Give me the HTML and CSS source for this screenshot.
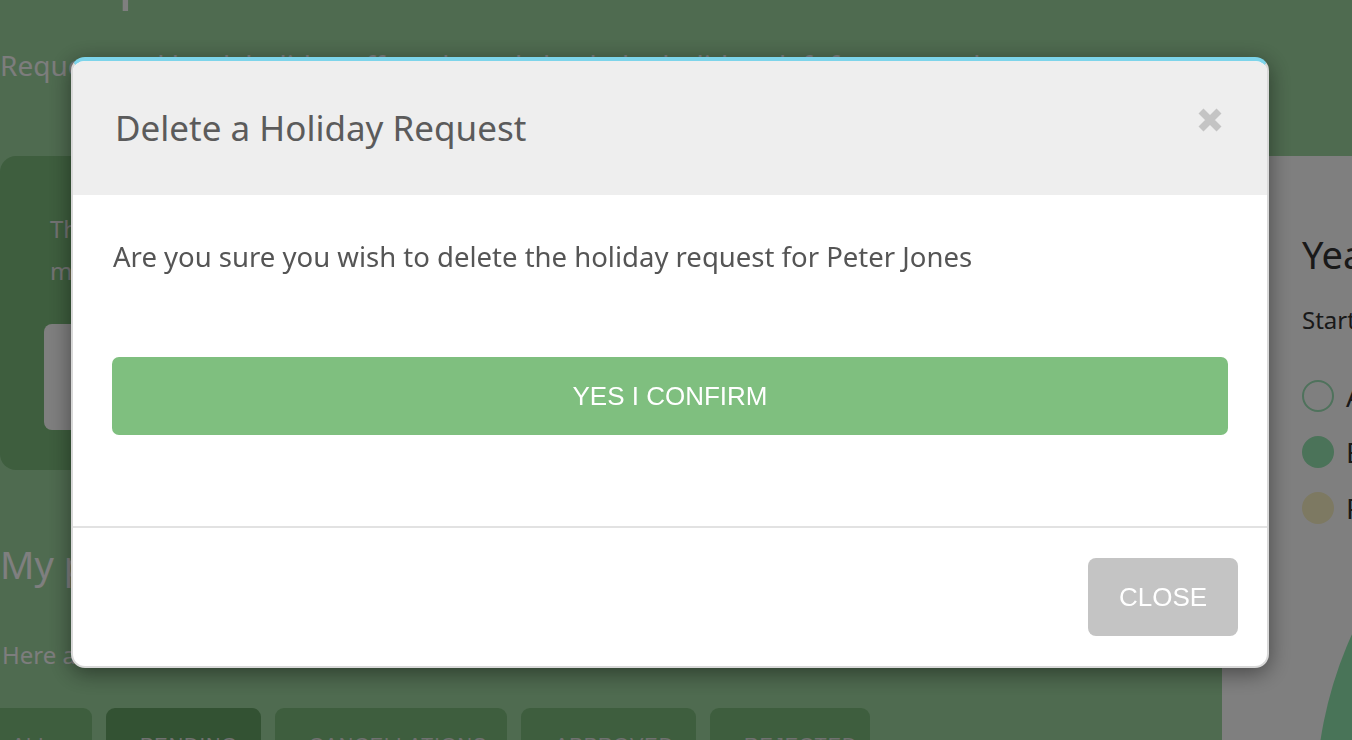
FILE: index.html
```html
<!DOCTYPE html>
<html lang="en">
<head>
<meta charset="utf-8">
<title>Delete a Holiday Request</title>
<link rel="stylesheet" href="styles.css">
</head>
<body>
<div class="page">
  <h1 class="page-title">Requests</h1>
  <p class="page-sub">Request and book holiday off work, and check the holidays left for you and your team</p>
  <div class="layout">
    <main class="main-col">
      <section class="promo-card">
        <p class="promo-text">The holiday year is nearly over, please<br>make sure you have booked the time you are entitled to</p>
        <button class="promo-btn">Book holiday</button>
      </section>
      <h2 class="section-title">My pending requests</h2>
      <p class="section-text">Here are the ones that still need action</p>
      <nav class="tabs">
        <span class="tab">ALL</span>
        <span class="tab tab-active">PENDING</span>
        <span class="tab">CANCELLATIONS</span>
        <span class="tab">APPROVED</span>
        <span class="tab">REJECTED</span>
      </nav>
    </main>
    <aside class="side-panel">
      <h3 class="side-title">Year overview</h3>
      <p class="side-text">Starting 1 January</p>
      <ul class="legend">
        <li class="legend-item"><span class="dot dot-outline"></span>Available</li>
        <li class="legend-item"><span class="dot dot-green"></span>Booked</li>
        <li class="legend-item"><span class="dot dot-tan"></span>Pending</li>
      </ul>
      <div class="pie"></div>
    </aside>
  </div>
</div>

<div class="overlay"></div>

<div class="modal" role="dialog">
  <header class="modal-header">
    <h2 class="modal-title">Delete a Holiday Request</h2>
    <button class="modal-x" aria-label="Close">
      <svg width="26" height="26" viewBox="0 0 26 26"><path d="M4 4 L22 22 M22 4 L4 22" stroke="#c4c4c4" stroke-width="7" stroke-linecap="butt"/></svg>
    </button>
  </header>
  <div class="modal-body">
    <p class="modal-text">Are you sure you wish to delete the holiday request for Peter Jones</p>
    <button class="btn-confirm">YES I CONFIRM</button>
  </div>
  <footer class="modal-footer">
    <button class="btn-close">CLOSE</button>
  </footer>
</div>
</body>
</html>
```

FILE: styles.css
```css
* { box-sizing: border-box; }
html, body { margin: 0; height: 100%; }
body {
  background: #9ed6a0;
  font-family: "Noto Sans", "Open Sans", sans-serif;
  overflow: hidden;
}
.page { display: flex; flex-direction: column; }
.page-title {
  margin: -66px 0 0 0;
  padding-left: 25px;
  font-size: 60px;
  font-weight: 400;
  color: #ffffff;
  line-height: 80px;
  height: 80px;
}
.page-sub {
  margin: 33px 0 0 0;
  height: 109px;
  font-size: 28px;
  line-height: 36px;
  color: #fafafa;
  white-space: nowrap;
}
.layout {
  display: grid;
  grid-template-columns: 1222px 1fr;
}
.main-col { display: flex; flex-direction: column; padding-right: 30px; }
.promo-card {
  background: #7cbc7c;
  border-radius: 16px;
  height: 314px;
  padding: 52px 0 0 50px;
}
.promo-text {
  margin: 0 0 32px 0;
  font-size: 24px;
  line-height: 42px;
  color: #e6e6e6;
  white-space: nowrap;
}
.promo-btn {
  margin-left: -6px;
  width: 300px;
  height: 106px;
  border: 0;
  border-radius: 8px;
  background: #ffffff;
}
.section-title {
  margin: 72px 0 0 0;
  font-size: 38px;
  font-weight: 400;
  color: #ffffff;
  line-height: 44px;
}
.section-text {
  margin: 53px 0 0 2px;
  font-size: 24px;
  line-height: 32px;
  color: #fafafa;
}
.tabs {
  display: flex;
  gap: 14px;
  margin: 37px 0 0 -30px;
}
.tab {
  background: #7cbc7c;
  border-radius: 9px;
  height: 80px;
  padding: 26px 34px 0;
  font-family: "Liberation Sans", sans-serif;
  font-size: 20px;
  letter-spacing: 1px;
  color: #e0e0e0;
  text-align: center;
}
.tab:nth-child(1) { width: 122px; }
.tab:nth-child(2) { width: 155px; }
.tab:nth-child(3) { width: 232px; }
.tab:nth-child(4) { width: 175px; }
.tab:nth-child(5) { width: 160px; }
.tab-active { background: #66a466; }
.side-panel {
  background: #fefefe;
  height: 700px;
  padding: 72px 0 0 80px;
  position: relative;
  overflow: hidden;
}
.side-title {
  margin: 0;
  font-size: 38px;
  font-weight: 400;
  color: #333333;
  line-height: 52px;
  white-space: nowrap;
}
.side-text {
  margin: 22px 0 0 0;
  font-size: 24px;
  line-height: 36px;
  color: #333333;
  white-space: nowrap;
}
.legend { list-style: none; margin: 30px 0 0 0; padding: 0; }
.legend-item {
  display: flex;
  align-items: center;
  gap: 12px;
  height: 56px;
  font-size: 28px;
  color: #333333;
  white-space: nowrap;
}
.dot { width: 32px; height: 32px; border-radius: 50%; flex: none; }
.dot-outline { border: 2px solid #9ee4b8; }
.dot-green { background: #96e6b2; }
.dot-tan { background: #faf2c4; }
.pie {
  position: absolute;
  left: 94px;
  top: 244px;
  width: 800px;
  height: 800px;
  border-radius: 50%;
  background: #92e8b0;
}

.overlay {
  position: fixed;
  inset: 0;
  background: rgba(0, 0, 0, 0.5);
}

.modal {
  position: fixed;
  left: 71px;
  top: 57px;
  width: 1198px;
  height: 611px;
  background: #ffffff;
  border: 2px solid #d8d8d8;
  border-top: 4px solid #7dd4ea;
  border-radius: 14px;
  overflow: hidden;
  display: flex;
  flex-direction: column;
  box-shadow: 0 5px 22px rgba(0, 0, 0, 0.45);
  font-family: "Noto Sans", "Open Sans", sans-serif;
}
.modal-header {
  background: #eeeeee;
  height: 134px;
  flex: none;
  display: flex;
  align-items: center;
  justify-content: space-between;
  padding: 0 44px 0 42px;
}
.modal-title {
  margin: 0;
  font-size: 35px;
  font-weight: 400;
  color: #5b5b5b;
  line-height: 40px;
}
.modal-x {
  border: 0;
  background: none;
  padding: 0;
  width: 26px;
  height: 26px;
  margin-bottom: 16px;
  display: flex;
}
.modal-body {
  flex: none;
  height: 333px;
  padding: 44px 39px 0 39px;
  border-bottom: 2px solid #e2e2e2;
}
.modal-text {
  margin: 0 0 0 1px;
  font-size: 27.5px;
  line-height: 36px;
  color: #555555;
  white-space: nowrap;
}
.btn-confirm {
  display: block;
  width: 100%;
  height: 78px;
  margin-top: 82px;
  border: 0;
  border-radius: 7px;
  background: #7fbf7f;
  color: #ffffff;
  font-family: "Liberation Sans", Arial, sans-serif;
  font-size: 26px;
}
.modal-footer {
  flex: 1;
  display: flex;
  justify-content: flex-end;
  align-items: flex-start;
  padding: 30px 29px 0 0;
}
.btn-close {
  width: 150px;
  height: 78px;
  border: 0;
  border-radius: 8px;
  background: #c4c4c4;
  color: #ffffff;
  font-family: "Liberation Sans", Arial, sans-serif;
  font-size: 26px;
}
```
